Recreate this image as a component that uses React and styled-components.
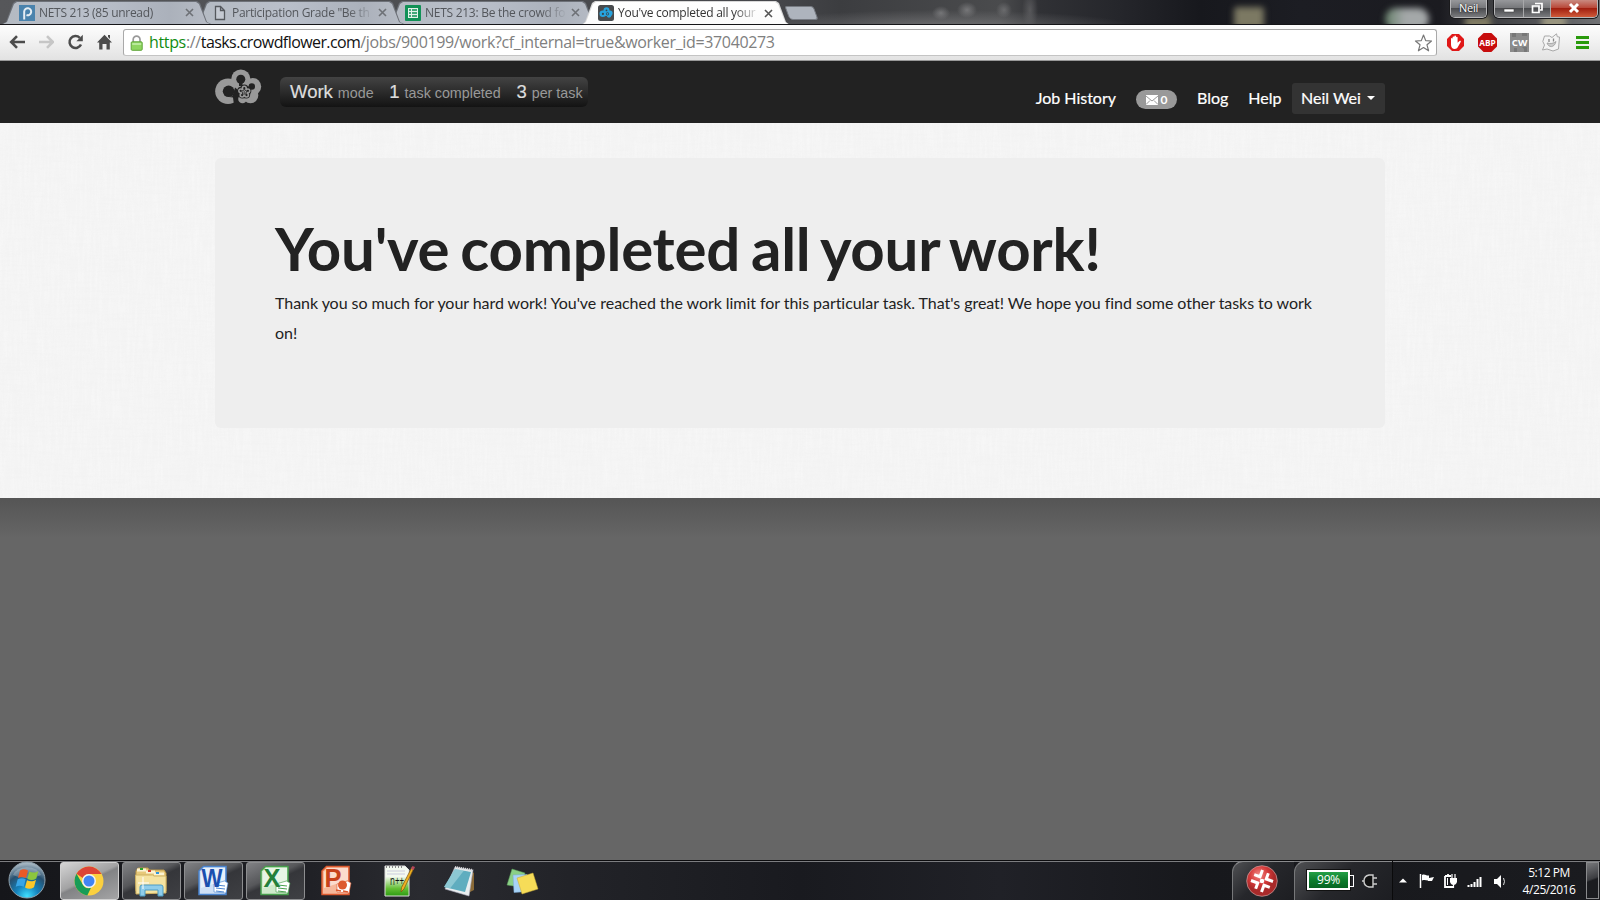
import React from "react";
import styled, { createGlobalStyle } from "styled-components";

const GlobalStyle = createGlobalStyle`
  * { box-sizing: border-box; }
  html, body { margin: 0; padding: 0; overflow: hidden; }
`;

const ui = `"Open Sans", "Noto Sans", sans-serif`;

const Screen = styled.div`
  width: 1600px;
  height: 900px;
  display: flex;
  flex-direction: column;
  overflow: hidden;
  background: #666;
`;

/* ---------- window frame ---------- */

const TitleBar = styled.div`
  position: relative;
  height: 25px;
  flex: none;
  display: flex;
  justify-content: space-between;
  padding-left: 2px;
  border-bottom: 1px solid #151518;
  overflow: hidden;
  background:
    radial-gradient(ellipse 9px 7px at 941px 13px, rgba(150, 150, 152, 0.55), transparent),
    radial-gradient(ellipse 10px 8px at 967px 10px, rgba(150, 150, 152, 0.6), transparent),
    radial-gradient(ellipse 8px 8px at 1004px 10px, rgba(150, 150, 152, 0.45), transparent),
    radial-gradient(ellipse 8px 20px at 1030px 10px, rgba(120, 120, 122, 0.5), transparent),
    radial-gradient(ellipse 200px 18px at 940px 28px, rgba(150, 150, 152, 0.55), transparent),
    linear-gradient(90deg, #56575a 0, #45464a 780px, #3c3d40 840px, #4a4b4d 1000px, #303135 1040px, #25262b 1120px, #17181d 1200px, #1c1d23 1300px, #1b1b20 1440px, #38393c 1480px, #707174 1600px);
`;

const Blob = styled.div`
  position: absolute;
  left: ${(p) => p.$x}px;
  top: ${(p) => p.$y}px;
  width: ${(p) => p.$w}px;
  height: 22px;
  border-radius: ${(p) => p.$r || 3}px;
  background: ${(p) => p.$c};
  filter: blur(3px);
`;

const Tabs = styled.div`
  position: relative;
  display: flex;
  height: 24px;
`;

const tabShape = "polygon(0 100%, 4px 22px, 11px 3px, 14px 1px, 195px 1px, 198px 3px, 205px 22px, 209px 100%)";
const tabInner = "polygon(1px 100%, 5px 22px, 12px 4px, 15px 2px, 194px 2px, 197px 4px, 204px 22px, 208px 100%)";

const TabBox = styled.div`
  position: relative;
  z-index: ${(p) => (p.$active ? 5 : p.$z)};
  width: 209px;
  height: ${(p) => (p.$active ? 25 : 24)}px;
  margin-right: -16px;
  flex: none;
  display: flex;
  align-items: center;
  padding: 1px 13px 0 17px;
  clip-path: ${tabShape};
  background: ${(p) => (p.$active ? "#d8d8d8" : "#6d7178")};
  &::before {
    content: "";
    position: absolute;
    inset: 0;
    clip-path: ${tabInner};
    background: ${(p) => (p.$active ? "linear-gradient(#fff, #fbfbfb)" : "linear-gradient(90deg, #b4bac2, #b9bfca 45%, #abb1bb 80%, #b7bcc5)")};
  }
`;

const Favicon = styled.svg`
  position: relative;
  width: 16px;
  height: 16px;
  flex: none;
`;

const TabTitle = styled.span`
  position: relative;
  width: 142px;
  margin-left: 4px;
  white-space: nowrap;
  font: 12px/18px ${ui};
  letter-spacing: ${(p) => p.$ls}px;
  color: ${(p) => (p.$active ? "#333" : "#54575c")};
  mask-image: linear-gradient(90deg, #000 116px, transparent 142px);
`;

const TabClose = styled.svg`
  position: relative;
  width: 9px;
  height: 9px;
  margin-left: 4px;
  flex: none;
`;

const NewTab = styled.div`
  width: 29px;
  height: 14px;
  margin: 6px 0 0 13px;
  border-radius: 2px 3px 3px 4px;
  transform: skewX(20deg);
  background: #aeb4bd;
  border: 1px solid #777b82;
`;

const Controls = styled.div`
  position: relative;
  display: flex;
  gap: 7px;
  padding-right: 2px;
  height: 19px;
`;

const ControlGroup = styled.div`
  display: flex;
  height: 18px;
  border: 1px solid #b6b6b8;
  border-top: 0;
  border-radius: 0 0 5px 5px;
  overflow: hidden;
  box-shadow: 0 0 0 1px #1a1a1c;
`;

const ControlButton = styled.div`
  width: ${(p) => p.$w}px;
  display: flex;
  align-items: center;
  justify-content: center;
  padding-bottom: 1px;
  border-left: ${(p) => (p.$first ? "0" : "1px solid #a8a8aa")};
  background: ${(p) =>
    p.$red
      ? "linear-gradient(#c98a80 0, #b9493a 45%, #a11f10 50%, #cf5a3a 100%)"
      : "linear-gradient(#97989b 0, #77787b 45%, #4a4b4e 50%, #7a7b7e 100%)"};
  font: 11px/16px ${ui};
  letter-spacing: -0.2px;
  color: #fff;
  text-shadow: 0 0 2px #000;
`;

/* ---------- toolbar ---------- */

const Toolbar = styled.div`
  height: 36px;
  flex: none;
  display: flex;
  align-items: center;
  padding: 0 9px 1px;
  background: linear-gradient(#fdfdfd, #f3f3f3 40%, #e2e2e2);
  border-bottom: 1px solid #999;
`;

const NavIcons = styled.div`
  width: 114px;
  display: flex;
  gap: 13px;
`;

const ToolIcon = styled.svg`
  width: ${(p) => p.$s || 16}px;
  height: ${(p) => p.$s || 16}px;
  flex: none;
`;

const AddressBar = styled.div`
  width: 1314px;
  height: 27px;
  margin-top: 1px;
  display: flex;
  align-items: center;
  padding: 0 4px 0 6px;
  background: #fff;
  border: 1px solid #a9a9a9;
  border-bottom-color: #c4c4c4;
  border-radius: 3px;
`;

const Url = styled.div`
  flex: 1;
  margin: -1px 0 0 3px;
  white-space: nowrap;
  font: 16px/22px ${ui};
  letter-spacing: -0.35px;
  color: #808080;
`;
const Secure = styled.span` color: #128c12; `;
const Host = styled.span`
  color: #111;
  letter-spacing: -0.58px;
`;

const Extensions = styled.div`
  display: flex;
  align-items: center;
  gap: 13px;
  margin-left: 9px;
`;

/* ---------- page ---------- */

const SiteHeader = styled.header`
  height: 62px;
  flex: none;
  display: flex;
  justify-content: space-between;
  padding: 0 215px;
  background: #222;
  font-family: Lato, sans-serif;
`;

const Brand = styled.div`
  display: flex;
  align-items: flex-start;
`;

const Logo = styled.svg`
  width: 47px;
  height: 37px;
  margin-top: 8px;
`;

const Stats = styled.div`
  width: 308px;
  height: 30px;
  margin: 16px 0 0 18px;
  padding-left: 10px;
  display: flex;
  align-items: baseline;
  border-radius: 6px;
  background: linear-gradient(#434343, #131313);
  font: 14.3px/32px "Liberation Sans", Arial, sans-serif;
  color: #999;
  white-space: nowrap;
`;

const Stat = styled.span`
  margin-right: 15.7px;
`;

const Strong = styled.span`
  font-size: 18.5px;
  line-height: 28px;
  color: #ddd;
  -webkit-text-stroke: 0.2px #ddd;
  margin-right: 5px;
`;

const SiteNav = styled.nav`
  display: flex;
  height: 31px;
  margin-top: 22px;
  align-items: center;
  font-size: 16px;
  color: #fff;
`;

const NavLink = styled.a`
  margin: -2px ${(p) => p.$gap}px 0 0;
  -webkit-text-stroke: 0.2px #fff;
  white-space: nowrap;
`;

const MailBadge = styled.span`
  width: 41px;
  height: 19px;
  margin: 2px 20px 0 0;
  display: flex;
  align-items: center;
  justify-content: center;
  gap: 3px;
  border-radius: 10px;
  background: #999;
  font: bold 12px/19px Lato, sans-serif;
`;

const UserMenu = styled.div`
  width: 93px;
  height: 31px;
  display: flex;
  align-items: center;
  padding: 0 0 2px 9px;
  margin-left: 1px;
  border-radius: 3px;
  background: #333;
  white-space: nowrap;
  -webkit-text-stroke: 0.2px #fff;
`;

const Caret = styled.span`
  margin-left: 6px;
  border: 4px solid transparent;
  border-top-color: #fff;
  border-bottom: 0;
`;

const Main = styled.main`
  position: relative;
  height: 375px;
  flex: none;
  padding: 35px 215px 0;
  background: #f4f4f4;
`;

const Linen = styled.svg`
  position: absolute;
  inset: 0;
  width: 100%;
  height: 100%;
`;

const Hero = styled.section`
  position: relative;
  height: 270px;
  padding: 60px;
  border-radius: 6px;
  background: #eee;
  color: #222;
  font-family: Lato, sans-serif;
`;

const Title = styled.h1`
  margin: 0;
  font-size: 60px;
  line-height: 60px;
  font-weight: 700;
  letter-spacing: -0.25px;
  word-spacing: -3.4px;
  white-space: nowrap;
`;

const Lead = styled.p`
  margin: 10px 0 0;
  font-size: 16px;
  line-height: 30px;
  letter-spacing: -0.05px;
`;

const Backdrop = styled.div`
  flex: 1;
  background: linear-gradient(#555, #666 40px);
`;

/* ---------- taskbar ---------- */

const Taskbar = styled.footer`
  height: 40px;
  flex: none;
  display: flex;
  align-items: stretch;
  border-top: 1px solid #0c0c0e;
  box-shadow: inset 0 1px 0 #7c7d80;
  background: linear-gradient(90deg, #15161a, #1f2025 300px, #2a2b30 420px, #222328 570px, #191a1f 800px, #202127 1000px, #17181c 1200px, #1a1b1f);
`;

const Start = styled.div`
  width: 60px;
  padding-left: 8px;
`;

const TaskButton = styled.div`
  width: 59px;
  height: 38px;
  margin: 1px 3px 0 0;
  display: flex;
  align-items: center;
  justify-content: center;
  padding-right: ${(p) => p.$shift || 1}px;
  border-radius: 3px;
  border: 1px solid ${(p) => (p.$active ? "#d0d0d0" : p.$open ? "#8d8e90" : "transparent")};
  background: ${(p) =>
    p.$active
      ? "linear-gradient(155deg, #d5d5d5, #a2a2a3 45%, #828385 50%, #a5a5a6)"
      : p.$open
      ? "linear-gradient(155deg, #818285, #56575a 40%, #35363a 50%, #3f4044)"
      : "none"};
`;

const TaskIcon = styled.svg`
  width: ${(p) => p.$s || 34}px;
  height: ${(p) => p.$s || 34}px;
  flex: none;
  margin-top: -1px;
  overflow: visible;
`;

const Spacer = styled.div` flex: 1; `;

const Band = styled.div`
  width: ${(p) => p.$w}px;
  display: flex;
  align-items: center;
  padding-left: ${(p) => p.$pl}px;
  border-left: 1px solid #77787a;
  border-top: 1px solid #8a8b8d;
  border-radius: 11px 0 0 0;
  background: linear-gradient(135deg, #505154, #26272b 45%, #1d1e22);
`;

const Battery = styled.div`
  position: relative;
  width: 43px;
  height: 20px;
  margin-top: -2px;
  border: 2px solid #fff;
  outline: 1px solid #111;
  background: linear-gradient(#25a047, #0c7a2b 55%, #076522);
  color: #fff;
  font: 12px/16px ${ui};
  text-align: center;
  letter-spacing: -0.2px;
  &::after {
    content: "";
    position: absolute;
    right: -6px;
    top: 3px;
    width: 4px;
    height: 10px;
    border: 1px solid #fff;
    border-left: 0;
  }
`;

const Plug = styled.svg`
  width: 17px;
  height: 14px;
  margin: -1px 0 0 11px;
`;

const Tray = styled.div`
  width: 194px;
  display: flex;
  align-items: center;
  border-left: 1px solid #0a0a0b;
  padding-left: 6px;
`;

const TrayIcons = styled.svg`
  width: 108px;
  height: 20px;
`;

const Clock = styled.div`
  width: 68px;
  margin-left: 8px;
  padding-top: 1px;
  text-align: center;
  color: #fff;
  font: 12px/17px ${ui};
  letter-spacing: -0.45px;
  white-space: nowrap;
`;

const ShowDesktop = styled.div`
  width: 13px;
  margin: 1px 1px 1px 0;
  border: 1px solid #8a8b8d;
  background: linear-gradient(160deg, #77787b, #3c3d41 45%, #1b1c20 50%);
`;

/* ---------- drawings ---------- */

const petals = (cx, cy, d, r) =>
  [-90, -18, 54, 126, 198].map((a) => {
    const t = (a * Math.PI) / 180;
    return <circle key={a} cx={cx + d * Math.cos(t)} cy={cy + d * Math.sin(t)} r={r} />;
  });

function FlowerLogo() {
  return (
    <Logo viewBox="0 0 47 37">
      <g fill="#999">
        <circle cx="25.800" cy="10" r="9.600" />
        <circle cx="13" cy="22.300" r="12.800" />
        <circle cx="37.600" cy="17.500" r="8.600" />
        <circle cx="35.500" cy="26.500" r="7.800" />
        <circle cx="27" cy="20" r="9" />
      </g>
      <g fill="#222">
        <circle cx="25.800" cy="10.300" r="4.500" />
        <circle cx="13.600" cy="22.300" r="5.800" />
        <circle cx="36.800" cy="17.500" r="3.200" />
        <path d="M14 28.100l3.500-1L20 18.500l5 4-1 6 1 8.500h-5.500l-.7-2.500-.8-6z" />
        <path d="M24 13h3.500v4H24zM33 17l4 2-2 2z" />
      </g>
      <circle cx="27.500" cy="30" r="4.300" fill="#999" />
      <g fill="#222">{petals(29.3, 22.8, 3.2, 4)}</g>
      <g fill="#999">{petals(29.3, 23, 3.7, 2.7)}<circle cx="29.300" cy="23" r="4" /></g>
      <g fill="#222">{petals(29.3, 23, 3.8, 1.1)}{petals(29.3, 23, 1.5, 1.3)}</g>
      <g fill="#999">{petals(29.3, 23, 1.3, 0.8)}</g>
    </Logo>
  );
}

const icons = {
  piazza: (
    <>
      <rect width="16" height="16" fill="#4a83ad" />
      <path d="M5.200 14.500V6.500a3.500 3.500 0 1 1 2.300 3.500" fill="none" stroke="#e5edf3" strokeWidth="2" />
    </>
  ),
  page: <path d="M3.500 1.500h5l4 4v9h-9zM8.500 1.500v4h4" fill="#c5cad2" stroke="#55585d" strokeWidth="1.300" />,
  sheet: (
    <>
      <rect width="16" height="16" rx="1" fill="#119156" />
      <rect x="3" y="3" width="10" height="10" fill="#e4f1ea" />
      <path d="M4 5h2M7 5h5M4 8h2M7 8h5M4 11h2M7 11h5" stroke="#119156" strokeWidth="1.600" />
    </>
  ),
  flower: (
    <>
      <rect width="16" height="16" rx="2.500" fill="#474a4d" />
      <g fill="#27a3de">
        <circle cx="8.500" cy="5.200" r="3" /><circle cx="4.800" cy="8.800" r="3.300" /><circle cx="12" cy="8" r="2.600" /><circle cx="11" cy="10.300" r="2.400" /><circle cx="8" cy="8" r="3" />
      </g>
      <g fill="#38464f"><circle cx="8.500" cy="5.400" r=".9" /><circle cx="4.900" cy="8.900" r="1.100" /><circle cx="9.500" cy="8.800" r="1.600" /></g>
      <circle cx="9.500" cy="8.800" r=".9" fill="#27a3de" />
    </>
  ),
};

function Tab({ icon, title, active, z, ls }) {
  return (
    <TabBox $active={active} $z={z}>
      <Favicon viewBox="0 0 16 16">{icons[icon]}</Favicon>
      <TabTitle $active={active} $ls={ls}>{title}</TabTitle>
      <TabClose viewBox="0 0 9 9">
        <path d="M1 1l7 7M8 1L1 8" stroke={active ? "#555" : "#6e7176"} strokeWidth="1.600" />
      </TabClose>
    </TabBox>
  );
}

function BrowserToolbar() {
  return (
    <Toolbar>
      <NavIcons>
        <ToolIcon viewBox="0 0 16 16">
          <path d="M16 8H3M8 2.200L2.200 8 8 13.800" fill="none" stroke="#4c4c4c" strokeWidth="2.600" />
        </ToolIcon>
        <ToolIcon viewBox="0 0 16 16">
          <path d="M1 8h13M9 2.200L14.800 8 9 13.800" fill="none" stroke="#c6c6c6" strokeWidth="2.600" />
        </ToolIcon>
        <ToolIcon viewBox="0 0 16 16">
          <path d="M14 10.500A6 6 0 1 1 12.800 3.800" fill="none" stroke="#4c4c4c" strokeWidth="2.500" />
          <path d="M15.800 .8v6.400H9.400z" fill="#4c4c4c" />
        </ToolIcon>
        <ToolIcon viewBox="0 0 16 16">
          <path d="M8.500 .8L16 8.500H13.800V15.500H10.500V10H6.500v5.500H3.200V8.500H1zM12 1h2v4l-2-2z" fill="#4c4c4c" />
        </ToolIcon>
      </NavIcons>
      <AddressBar>
        <ToolIcon viewBox="0 0 16 16">
          <path d="M3.200 8V4.600a3.400 3.400 0 0 1 6.800 0V8" fill="none" stroke="#999" strokeWidth="1.700" />
          <rect x="1.200" y="6.800" width="11" height="8.500" rx="1" fill="#8ed560" stroke="#5fa53a" />
          <path d="M2.200 8h9v2h-9z" fill="#b9e99b" />
        </ToolIcon>
        <Url>
          <Secure>https</Secure>://<Host>tasks.crowdflower.com</Host>/jobs/900199/work?cf_internal=true&amp;worker_id=37040273
        </Url>
        <ToolIcon $s={18} viewBox="0 0 18 18">
          <path d="M9.500 1l2.200 5.600 5.800.4-4.500 3.800 1.600 6L9.500 13.600 4.400 16.800l1.600-6L1.500 7l5.800-.4z" fill="#fff" stroke="#777" strokeWidth="1.200" strokeLinejoin="round" />
        </ToolIcon>
      </AddressBar>
      <Extensions>
        <ToolIcon $s={19} viewBox="0 0 19 19">
          <path d="M6 1h7l5 5v7l-5 5H6l-5-5V6z" fill="#e01818" />
          <path d="M5 11.500V5.700c0-1 1.600-1 1.600 0V4.200c0-1 1.700-1 1.700 0v-1c0-1 1.700-1 1.700 0v1.200c0-1 1.600-1 1.600 0v5.400l1.900-1.800c1-.6 1.800.3 1.200 1.100l-3 5.200c-.6 1.200-1.500 1.700-3 1.700-2.500 0-3.700-1.800-3.700-4.500z" fill="#fff" />
        </ToolIcon>
        <ToolIcon $s={19} viewBox="0 0 19 19">
          <path d="M5.600 0h7.800L19 5.600v7.800L13.400 19H5.600L0 13.400V5.600z" fill="#c70d0d" />
          <text x="9.500" y="12.800" textAnchor="middle" fontFamily="Open Sans" fontWeight="700" fontSize="9" textLength="16.500" lengthAdjust="spacingAndGlyphs" fill="#fff">ABP</text>
        </ToolIcon>
        <ToolIcon $s={19} viewBox="0 0 19 19">
          <rect width="19" height="19" fill="#8b8b8b" />
          <path d="M2 0v4h4V0M12 0v3h5V0M4 15h3v4H4M12 14h5v5h-3v-3" fill="#777" />
          <text x="9.500" y="12.900" textAnchor="middle" fontFamily="Open Sans" fontWeight="700" fontSize="9.500" textLength="15.500" lengthAdjust="spacingAndGlyphs" fill="#fff">CW</text>
        </ToolIcon>
        <ToolIcon $s={19} viewBox="0 0 19 19">
          <path d="M2.500 3l5 0 2.500 1.500L14.500 .8l.8 3 2.200.2-1 12-5.500 2-6-2-4.500 1L2.500 12 .8 8.500z" fill="#f4f4f4" stroke="#a8a8a8" />
          <path d="M7 6v3M11.500 5.500v3" stroke="#888" strokeWidth="1.300" /><path d="M5 10c1.500 5 7.500 5 9-1.500-2 2-6 2.500-9 1.500z" fill="#ccc" stroke="#999" strokeWidth=".8" />
        </ToolIcon>
        <ToolIcon $s={15} viewBox="0 0 15 15">
          <path d="M2 2.500h13M2 7.500h13M2 12.500h13" stroke="#2a9a0c" strokeWidth="3" />
        </ToolIcon>
      </Extensions>
    </Toolbar>
  );
}

function StartOrb() {
  return (
    <TaskIcon $s={38} viewBox="0 0 38 38">
      <defs>
        <radialGradient id="orb" cx=".5" cy=".95" r=".9">
          <stop offset="0" stopColor="#3fe0ff" /><stop offset=".35" stopColor="#1583bd" /><stop offset=".7" stopColor="#27506f" /><stop offset="1" stopColor="#a3b4c0" />
        </radialGradient>
      </defs>
      <circle cx="19" cy="20" r="18" fill="url(#orb)" stroke="#8ea0ac" />
      <path d="M5 15a15 12 0 0 1 28 0c-8 4-20 4-28 0z" fill="#fff" opacity=".25" />
      <g transform="translate(0 1)">
        <path d="M12 9.500c3-2 5.500-1.500 8 0l-2 7.500c-3-1.500-5-1.500-8 0z" fill="#ea5a27" />
        <path d="M21.300 10.500c3 1.500 6 1.500 9-.5l-2 7.500c-3 2-6 2-9 .3z" fill="#8cc63d" />
        <path d="M9.700 18.300c3-1.500 5.500-1.500 8 0l-2 7.500c-3-1.500-5-1.500-8 0z" fill="#38a5e6" />
        <path d="M19 19.200c3 1.500 6 1.500 9-.5l-2 7.500c-3 2-6 2-9 .3z" fill="#fdc728" />
      </g>
    </TaskIcon>
  );
}

function ChromeIcon() {
  return (
    <TaskIcon viewBox="0 0 34 34">
      <circle cx="17" cy="17" r="14.500" fill="#fbd03f" />
      <path d="M4.500 9.700A14.500 14.500 0 0 1 29.600 10H17a7 7 0 0 0-6.200 4z" fill="#dc4437" />
      <path d="M4.500 9.700l6.400 11A7 7 0 0 0 19 23.800l-3.700 7.600A14.500 14.500 0 0 1 4.500 9.700z" fill="#179c57" />
      <circle cx="17" cy="17" r="7" fill="#f3f3f3" /><circle cx="17" cy="17" r="5.500" fill="#4184f3" />
    </TaskIcon>
  );
}

function FolderIcon() {
  return (
    <TaskIcon viewBox="0 0 34 34">
      <path d="M2 7l2-3h10l1 2h15l2 3v18H2z" fill="#e7c97a" stroke="#b9974a" />
      <path d="M3 6h9M12 8h9M20 10h10" stroke="#fbf3d3" strokeWidth="3" />
      <path d="M6 5h3" stroke="#28a428" strokeWidth="2" /><path d="M14 7h3" stroke="#d33c2a" strokeWidth="2" /><path d="M22 9h3" stroke="#2d94dd" strokeWidth="2" />
      <path d="M1.500 11h17l1.500 1h12v17l-30 1z" fill="#f5e3a1" stroke="#cfb263" />
      <path d="M6 32V23q0-2 2-2h19q2 0 2 2v9h-5v-6H11v6z" fill="#8fcdea" stroke="#4d9cc4" />
      <path d="M9 13v12M4 19h11" stroke="#fff" strokeWidth="1" />
    </TaskIcon>
  );
}

function OfficeIcon({ letter, dark, mid, light }) {
  return (
    <TaskIcon viewBox="0 0 34 34">
      <path d="M7.500 2.500h22.500v28H3V7z" fill={light} stroke={mid} strokeWidth="1.500" />
      <path d="M5 8l3-4h21v12L5 24z" fill="#fff" opacity=".5" />
      <path d="M18 20l10.500-3 3.500 2-2 10-12-1z" fill="#fff" stroke={mid} strokeWidth=".6" />
      {letter === "P" ? (
        <><circle cx="23.500" cy="21" r="4.500" fill={mid} /><path d="M17 26l5 1M24 27l5 1" stroke={mid} strokeWidth="1.500" /></>
      ) : (
        <path d="M20 21l9 1M20 24l9 1M20 27l8 1" stroke={mid} strokeWidth="1" />
      )}
      <text x={letter === "W" ? 16 : 14} y="23" textAnchor="middle" fontFamily="Liberation Sans" fontWeight="700" fontSize="25" textLength={letter === "W" ? 21 : 17} lengthAdjust="spacingAndGlyphs" fill={dark}>{letter}</text>
    </TaskIcon>
  );
}

function NotepadPlusIcon() {
  return (
    <TaskIcon viewBox="0 0 34 34">
      <defs><linearGradient id="npp" x2="0" y2="1"><stop offset=".35" stopColor="#f4faf0" /><stop offset=".75" stopColor="#64bf35" /><stop offset="1" stopColor="#2c9b12" /></linearGradient></defs>
      <path d="M4 2h20l4 4v26H4z" fill="url(#npp)" stroke="#ddd" />
      <path d="M5 3h18" stroke="#888" strokeWidth="2" strokeDasharray="1 2" />
      <path d="M6 7h18M6 10h18" stroke="#ccd" />
      <text x="9" y="21" fontFamily="Open Sans" fontSize="13" textLength="14" lengthAdjust="spacingAndGlyphs" fill="#111">n++</text>
      <path d="M31 3l2 1-10 21-3 3 .5-4.500z" fill="#efb022" stroke="#7a5512" strokeWidth=".7" /><path d="M30 5l1.500-3 2.500 1-1.500 3z" fill="#b4475d" />
    </TaskIcon>
  );
}

function NotepadIcon() {
  return (
    <TaskIcon viewBox="0 0 34 34">
      <path d="M28 7l3 2 0 17-6 3z" fill="#8a6a37" />
      <path d="M12 3l18 3-4 26L2 25z" fill="#e9eef0" stroke="#aab" strokeWidth=".6" />
      <path d="M12 5l16 3-6 20L1 23z" fill="#5fadbf" /><path d="M12 5l9 1.500L7 24.500l-6-1.500z" fill="#9fd3dc" opacity=".7" />
      <path d="M12 3.500l18 3" stroke="#ddd" strokeWidth="3" strokeDasharray="1 1" />
    </TaskIcon>
  );
}

function NotesIcon() {
  return (
    <TaskIcon viewBox="0 0 34 34">
      <path d="M7 5l13 4-4 14-14-2z" fill="#8bcf86" stroke="#5aa05a" strokeWidth=".5" />
      <path d="M8 11l14-.5 1 17-14 1z" fill="#a8d3f7" stroke="#78a8d3" strokeWidth=".5" />
      <path d="M12 14l16-5 5 16-16 5z" fill="#f6dc58" stroke="#c5a838" strokeWidth=".5" />
    </TaskIcon>
  );
}

function PinwheelIcon() {
  return (
    <TaskIcon viewBox="0 0 34 34">
      <defs><radialGradient id="pin" cx=".4" cy=".3"><stop offset="0" stopColor="#f08a86" /><stop offset=".6" stopColor="#d63a3a" /><stop offset="1" stopColor="#a92a2a" /></radialGradient></defs>
      <circle cx="17" cy="17" r="15.300" fill="url(#pin)" stroke="#cfa0a0" strokeWidth=".7" />
      <g stroke="#fff" strokeWidth="3" fill="none">
        {[20, 110, 200, 290].map((a) => (
          <path key={a} transform={`rotate(${a} 17 17)`} d="M13.700 6.500v7.200H7.500" />
        ))}
      </g>
      <circle cx="17" cy="17" r="2.300" fill="#fff" />
    </TaskIcon>
  );
}

function TrayDrawing() {
  return (
    <TrayIcons viewBox="0 0 108 20">
      <path d="M0 11.500l4-4 4 4z" fill="#fff" />
      <path d="M21.500 3v14" stroke="#fff" strokeWidth="1.500" />
      <path d="M23 4c3-1.500 4 1 7 .5V7l5-1-2 4h-4V9.500c-2 0-3-1-6 0z" fill="#fff" />
      <path d="M46 5v11h8M46 5h6M49 3v2" fill="none" stroke="#fff" strokeWidth="1.800" />
      <path d="M48.500 7v7" stroke="#fff" /><path d="M51 7h7v4q-1 3-3.500 3T51 11z" fill="#fff" /><path d="M53 7V3M56 7V3M54.500 13v4" stroke="#fff" strokeWidth="1.200" />
      <path d="M69.500 16v-2M72.500 16v-3M75.500 16v-5M78.500 16V8M81.500 16V6" stroke="#fff" strokeWidth="2" />
      <path d="M95 8h3l4-4v13l-4-4h-3z" fill="#fff" /><path d="M104.500 7q2 3.500 0 7" stroke="#ddd" fill="none" />
    </TrayIcons>
  );
}

export default function App() {
  return (
    <Screen>
      <GlobalStyle />
      <TitleBar>
        <Blob $x={1234} $y={7} $w={30} $c="#7c7963" />
        <Blob $x={1385} $y={8} $w={44} $r={12} $c="linear-gradient(90deg, #66806a, #a4a8a9 45%)" />
        <Blob $x={1465} $y={16} $w={26} $c="#807b63" />
        <Blob $x={1542} $y={14} $w={24} $c="#99957f" />
        <Tabs>
          <Tab icon="piazza" title="NETS 213 (85 unread)" z={4} ls={-0.3} />
          <Tab icon="page" title={'Participation Grade "Be th'} z={3} ls={-0.3} />
          <Tab icon="sheet" title="NETS 213: Be the crowd fo" z={2} ls={-0.27} />
          <Tab icon="flower" title="You've completed all your" active ls={-0.25} />
          <NewTab />
        </Tabs>
        <Controls>
          <ControlGroup><ControlButton $w={35} $first>Neil</ControlButton></ControlGroup>
          <ControlGroup>
            <ControlButton $w={28} $first>
              <ToolIcon $s={12} viewBox="0 0 12 12"><path d="M1 7h10v3H1z" fill="#fff" stroke="#444" strokeWidth=".6" /></ToolIcon>
            </ControlButton>
            <ControlButton $w={27}>
              <ToolIcon $s={12} viewBox="0 0 12 12"><path d="M4 1.500h7v6.500H9M1.500 4h6.500v6.500H1.500z" fill="none" stroke="#fff" strokeWidth="1.700" /></ToolIcon>
            </ControlButton>
            <ControlButton $w={47} $red>
              <ToolIcon $s={12} viewBox="0 0 12 12"><path d="M2 2l8 8M10 2l-8 8" stroke="#fff" strokeWidth="3" /></ToolIcon>
            </ControlButton>
          </ControlGroup>
        </Controls>
      </TitleBar>
      <BrowserToolbar />
      <SiteHeader>
        <Brand>
          <FlowerLogo />
          <Stats>
            <Stat><Strong>Work</Strong>mode</Stat>
            <Stat><Strong>1</Strong>task completed</Stat>
            <Stat><Strong>3</Strong>per task</Stat>
          </Stats>
        </Brand>
        <SiteNav>
          <NavLink $gap={20}>Job History</NavLink>
          <MailBadge>
            <svg width="12" height="10" viewBox="0 0 12 10">
              <path d="M0 0h12v10H0z" fill="#fff" /><path d="M0 1l6 5 6-5M0 9.500l4-4M12 9.500l-4-4" fill="none" stroke="#999" />
            </svg>
            0
          </MailBadge>
          <NavLink $gap={20}>Blog</NavLink>
          <NavLink $gap={9.5}>Help</NavLink>
          <UserMenu>Neil Wei<Caret /></UserMenu>
        </SiteNav>
      </SiteHeader>
      <Main>
        <Linen>
          <filter id="warp" x="0" y="0" width="100%" height="100%">
            <feTurbulence type="fractalNoise" baseFrequency="0.4 0.03" numOctaves="2" />
            <feColorMatrix values="0 0 0 0 1  0 0 0 0 1  0 0 0 0 1  2 0 0 0 -0.8" />
          </filter>
          <filter id="weft" x="0" y="0" width="100%" height="100%">
            <feTurbulence type="fractalNoise" baseFrequency="0.03 0.4" numOctaves="2" seed="4" />
            <feColorMatrix values="0 0 0 0 0.86  0 0 0 0 0.86  0 0 0 0 0.86  2 0 0 0 -0.8" />
          </filter>
          <rect width="100%" height="100%" filter="url(#warp)" opacity="0.28" />
          <rect width="100%" height="100%" filter="url(#weft)" opacity="0.28" />
        </Linen>
        <Hero>
          <Title>You've completed all your work!</Title>
          <Lead>
            Thank you so much for your hard work! You've reached the work limit for this particular task. That's great! We hope you find some other tasks to work on!
          </Lead>
        </Hero>
      </Main>
      <Backdrop />
      <Taskbar>
        <Start><StartOrb /></Start>
        <TaskButton $active><ChromeIcon /></TaskButton>
        <TaskButton $open><FolderIcon /></TaskButton>
        <TaskButton $open $shift={2}><OfficeIcon letter="W" dark="#1b4fae" mid="#4a84cf" light="#cfe0f5" /></TaskButton>
        <TaskButton $open $shift={2}><OfficeIcon letter="X" dark="#23803a" mid="#47a04d" light="#cfeacb" /></TaskButton>
        <TaskButton $shift={3}><OfficeIcon letter="P" dark="#c7421b" mid="#dd5a2f" light="#f6b89b" /></TaskButton>
        <TaskButton $shift={4}><NotepadPlusIcon /></TaskButton>
        <TaskButton $shift={3}><NotepadIcon /></TaskButton>
        <TaskButton $shift={3}><NotesIcon /></TaskButton>
        <Spacer />
        <Band $w={62} $pl={12}><PinwheelIcon /></Band>
        <Band $w={98} $pl={12}>
          <Battery>99%</Battery>
          <Plug viewBox="0 0 17 14">
            <path d="M1 7h2q0-5 5-6h4v12H8q-5-1-5-6M12 4h4M12 10h4" fill="#111" stroke="#ccc" strokeWidth="1.400" />
          </Plug>
        </Band>
        <Tray>
          <TrayDrawing />
          <Clock>5:12 PM<br />4/25/2016</Clock>
        </Tray>
        <ShowDesktop />
      </Taskbar>
    </Screen>
  );
}
